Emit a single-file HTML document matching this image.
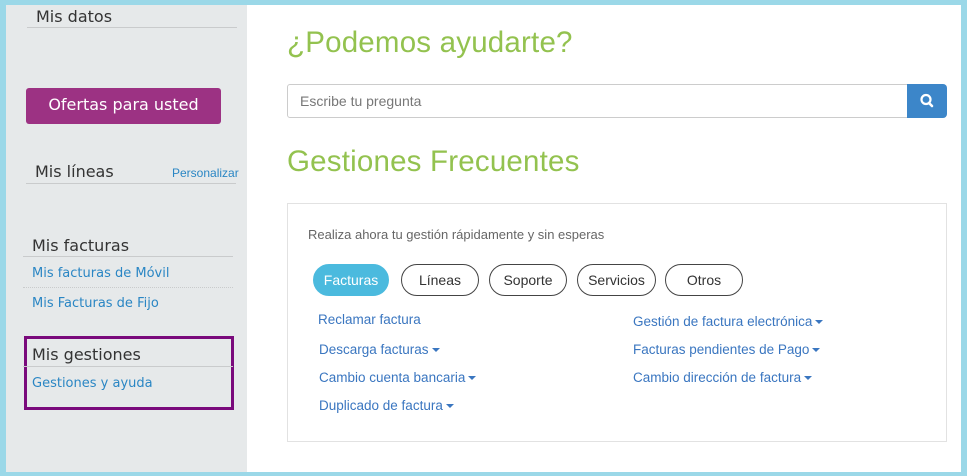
<!DOCTYPE html>
<html><head><meta charset="utf-8"><style>
*{margin:0;padding:0;box-sizing:border-box}
body{width:967px;height:476px;background:#9bd8e8;position:relative;overflow:hidden;font-family:"Liberation Sans",sans-serif}
.a{position:absolute}
#side{left:6px;top:5px;width:241px;height:467px;background:#e6e9ea}
#main{left:247px;top:5px;width:714px;height:467px;background:#fff}
.sv{font-family:"DejaVu Sans",sans-serif}
.h{color:#333;font-size:16px}
.ln{height:1px;background:#c9cbcc}
.lk{color:#2a86c4;font-size:13px}
.pill{top:264px;height:32px;border:1px solid #444;border-radius:16px;font-size:14px;color:#333;text-align:center;line-height:30px}
.g{color:#3a76c0;font-size:13.5px}
.car{display:inline-block;width:0;height:0;border-left:4px solid transparent;border-right:4px solid transparent;border-top:4px solid #3a76c0;vertical-align:middle;margin-left:3px}
.t{font-size:29.5px;color:#93c24f;letter-spacing:0.2px}
</style></head><body>
<div class="a" id="side"></div>
<div class="a" id="main"></div>
<div class="a sv h" style="left:36px;top:7px">Mis datos</div>
<div class="a ln" style="left:27px;top:27px;width:210px"></div>
<div class="a sv" style="left:26px;top:88px;width:195px;height:36px;background:#9c3283;border-radius:3px;color:#fff;font-size:16px;text-align:center;line-height:34px">Ofertas para usted</div>
<div class="a sv h" style="left:35px;top:162px">Mis líneas</div>
<div class="a" style="left:172px;top:166px;font-size:12px;color:#2a86c4">Personalizar</div>
<div class="a ln" style="left:26px;top:183px;width:210px"></div>
<div class="a sv h" style="left:32px;top:236px">Mis facturas</div>
<div class="a ln" style="left:23px;top:256px;width:210px"></div>
<div class="a sv lk" style="left:32px;top:266px">Mis facturas de Móvil</div>
<div class="a" style="left:23px;top:287px;width:210px;border-top:1px dotted #c9cbcc"></div>
<div class="a sv lk" style="left:32px;top:296px">Mis Facturas de Fijo</div>
<div class="a" style="left:24px;top:336px;width:210px;height:74px;border:3px solid #7a0a7c"></div>
<div class="a sv h" style="left:32px;top:345px">Mis gestiones</div>
<div class="a ln" style="left:23px;top:366px;width:210px"></div>
<div class="a sv lk" style="left:32px;top:376px">Gestiones y ayuda</div>

<div class="a t" style="left:287px;top:26px">¿Podemos ayudarte?</div>
<div class="a" style="left:287px;top:84px;width:621px;height:34px;border:1px solid #ccc;border-radius:3px 0 0 3px;font-size:14px;color:#777;padding:8px 12px">Escribe tu pregunta</div>
<div class="a" style="left:907px;top:84px;width:40px;height:34px;background:#3c86c9;border-radius:0 4px 4px 0">
<svg width="40" height="34"><circle cx="19" cy="15.5" r="4.5" fill="none" stroke="#fff" stroke-width="2.2"/><line x1="22" y1="19" x2="25" y2="22" stroke="#fff" stroke-width="2.6" stroke-linecap="round"/></svg></div>
<div class="a t" style="left:287px;top:145px">Gestiones Frecuentes</div>
<div class="a" style="left:287px;top:203px;width:660px;height:239px;border:1px solid #e2e2e2"></div>
<div class="a" style="left:308px;top:227px;font-size:13px;color:#666">Realiza ahora tu gestión rápidamente y sin esperas</div>
<div class="a pill" style="left:313px;width:76px;background:#4bbade;border-color:#4bbade;color:#fff">Facturas</div>
<div class="a pill" style="left:401px;width:78px">Líneas</div>
<div class="a pill" style="left:489px;width:78px">Soporte</div>
<div class="a pill" style="left:577px;width:79px">Servicios</div>
<div class="a pill" style="left:665px;width:78px">Otros</div>
<div class="a g" style="left:318px;top:312px">Reclamar factura</div>
<div class="a g" style="left:319px;top:342px">Descarga facturas<span class="car"></span></div>
<div class="a g" style="left:319px;top:370px">Cambio cuenta bancaria<span class="car"></span></div>
<div class="a g" style="left:319px;top:398px">Duplicado de factura<span class="car"></span></div>
<div class="a g" style="left:633px;top:314px">Gestión de factura electrónica<span class="car"></span></div>
<div class="a g" style="left:633px;top:342px">Facturas pendientes de Pago<span class="car"></span></div>
<div class="a g" style="left:633px;top:370px">Cambio dirección de factura<span class="car"></span></div>
</body></html>
